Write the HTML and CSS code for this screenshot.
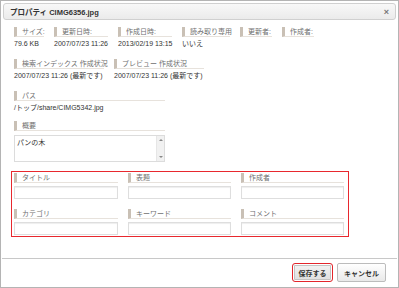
FILE: index.html
```html
<!DOCTYPE html>
<html lang="ja">
<head>
  <meta charset="UTF-8" />
  <title>プロパティ</title>
  <link rel="stylesheet" href="styles.css">
</head>
<body>

  <div class="dialog">
    <!-- タイトルバー -->
    <div class="titlebar">
      <span class="title">プロパティ CIMG6356.jpg</span>
      <span class="close">×</span>
    </div>

    <div class="content">
      <div class="row">
        <div class="item w30"><div class="label">サイズ:</div><div class="value">79.6 KB</div></div>
        <div class="item w54"><div class="label">更新日時:</div><div class="value">2007/07/23 11:26</div></div>
        <div class="item w54"><div class="label">作成日時:</div><div class="value">2013/02/19 13:15</div></div>
        <div class="item w48"><div class="label">読み取り専用</div><div class="value">いいえ</div></div>
        <div class="item w32"><div class="label">更新者:</div><div class="value"></div></div>
        <div class="item w32"><div class="label">作成者:</div><div class="value"></div></div>
      </div>

      <div class="row">
        <div class="item w90"><div class="label">検索インデックス 作成状況</div><div class="value">2007/07/23 11:26 (最新です)</div></div>
        <div class="item w90"><div class="label">プレビュー 作成状況</div><div class="value">2007/07/23 11:26 (最新です)</div></div>
      </div>

      <div class="row row-path">
        <div class="item wide"><div class="label">パス</div><div class="value">/トップ/share/CIMG5342.jpg</div></div>
      </div>

      <div class="item wide">
        <div class="label">概要</div>
        <div class="memo">
          <div class="memo-text">パンの木</div>
          <div class="memo-scroll"><span class="arrow-up"></span><span class="arrow-down"></span></div>
        </div>
      </div>

      <!-- メタ情報 -->
      <div class="meta-box">
        <div class="field"><div class="label">タイトル</div><div class="input"></div></div>
        <div class="field"><div class="label">表題</div><div class="input"></div></div>
        <div class="field"><div class="label">作成者</div><div class="input"></div></div>
        <div class="field"><div class="label">カテゴリ</div><div class="input"></div></div>
        <div class="field"><div class="label">キーワード</div><div class="input"></div></div>
        <div class="field"><div class="label">コメント</div><div class="input"></div></div>
      </div>
    </div>

    <div class="footer">
      <button class="btn btn-save">保存する</button>
      <button class="btn">キャンセル</button>
    </div>
  </div>

</body>
</html>
```

FILE: styles.css
```css
body {
  margin: 0;
  background-color: #fff;
  font-family: 'Liberation Sans', 'Noto Sans CJK JP', sans-serif;
  font-size: 7px;
  color: #333;
}

.dialog {
  width: 399px;
  height: 288px;
  box-sizing: border-box;
  border: 1px solid #b4b4b4;
  display: flex;
  flex-direction: column;
  background-color: #fff;
}

.titlebar {
  margin: 2px 2px 0;
  height: 17px;
  box-sizing: border-box;
  border: 1px solid #d0d0d0;
  border-radius: 3px;
  background: linear-gradient(#f8f8f8, #ebebeb);
  display: flex;
  align-items: center;
  justify-content: space-between;
  padding: 0 6px 0 6px;
}

.title {
  font-weight: bold;
  font-size: 7.5px;
  color: #333;
}

.close {
  font-size: 9px;
  font-weight: bold;
  color: #777;
}

.content {
  padding: 7px 0 0 13px;
}

.row {
  display: flex;
  gap: 10px;
  margin-bottom: 10px;
}

.row-path {
  margin-bottom: 8px;
}

.item {
  display: flex;
  flex-direction: column;
}

.w30 { width: 30px; }
.w32 { width: 32px; }
.w48 { width: 48px; }
.w54 { width: 54px; }
.w90 { width: 90px; }
.wide { width: 151px; }

.label {
  height: 9px;
  line-height: 9px;
  border-left: 3px solid #c9c0b5;
  border-bottom: 1px solid #e7e2dc;
  padding-left: 5px;
  color: #6f6f6f;
  white-space: nowrap;
}

.value {
  margin-top: 2px;
  height: 10px;
  line-height: 10px;
  white-space: nowrap;
  color: #333;
}

.memo {
  margin-top: 4px;
  height: 27px;
  box-sizing: border-box;
  border: 1px solid #dcdcdc;
  display: flex;
}

.memo-text {
  flex: 1;
  padding: 2px 2px;
  line-height: 10px;
}

.memo-scroll {
  width: 7px;
  background-color: #f1f1f1;
  border-left: 1px solid #e6e6e6;
  display: flex;
  flex-direction: column;
  justify-content: space-between;
  align-items: center;
  padding: 3px 0;
}

.arrow-up,
.arrow-down {
  width: 0;
  height: 0;
  border-left: 2px solid transparent;
  border-right: 2px solid transparent;
}

.arrow-up { border-bottom: 2px solid #888; }
.arrow-down { border-top: 2px solid #888; }

.meta-box {
  margin: 9px 0 0 -3px;
  width: 338px;
  box-sizing: border-box;
  border: 1px solid #e8282e;
  padding: 1px 3px 1px 2px;
  display: grid;
  grid-template-columns: 104px 103px 103px;
  column-gap: 10px;
  row-gap: 10px;
}

.field .label {
  margin-bottom: 3px;
}

.input {
  height: 13px;
  box-sizing: border-box;
  border: 1px solid #dedede;
  box-shadow: inset 0 1px 1px #eee;
}

.footer {
  margin: auto 1px 0;
  border-top: 1px solid #c8c8c8;
  height: 29px;
  box-sizing: border-box;
  display: flex;
  justify-content: flex-end;
  align-items: flex-start;
  gap: 4px;
  padding: 4px 11px 0 0;
}

.btn {
  height: 19px;
  padding: 0 6px;
  font-family: inherit;
  font-size: 7px;
  font-weight: bold;
  color: #333;
  white-space: nowrap;
  border: 1px solid #bcbcbc;
  border-radius: 2px;
  background: linear-gradient(#ffffff, #e9e9e9);
  cursor: pointer;
}

.btn-save {
  width: 41px;
  padding: 0;
  border: 1px solid #e3262c;
  border-radius: 3px;
  box-shadow: inset 0 0 0 1px #fff, inset 0 0 0 2px #c4c4c4;
  background: linear-gradient(#f4f4f4, #dedede);
}
```
